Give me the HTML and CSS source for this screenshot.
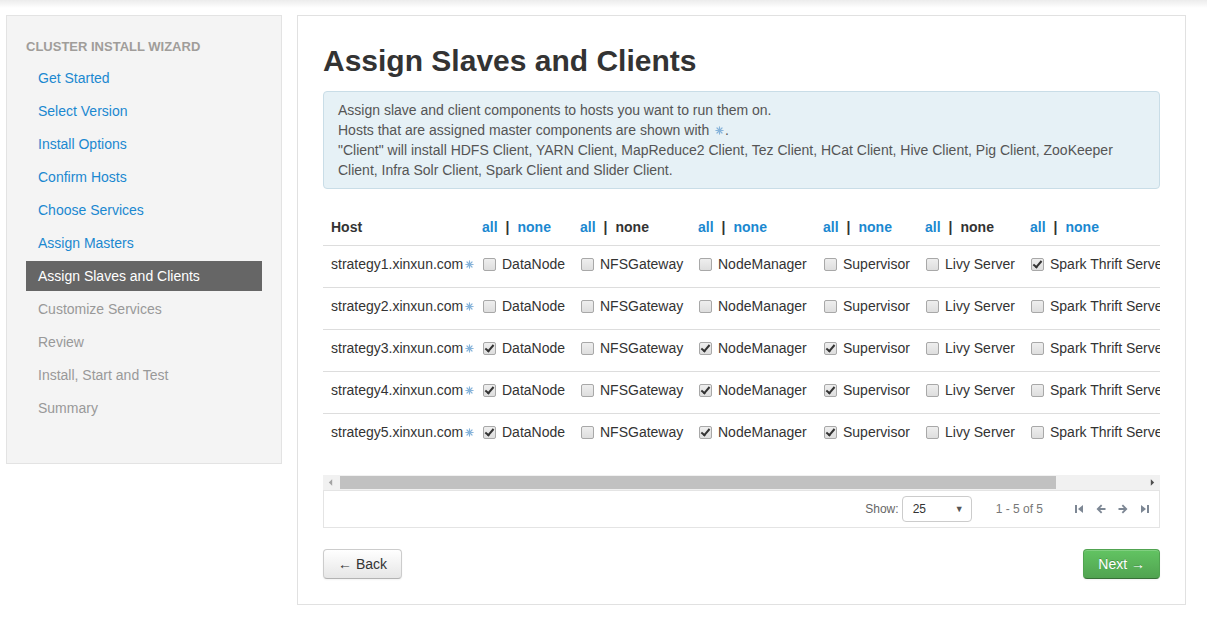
FILE: index.html
```html
<!DOCTYPE html>
<html lang="en">
<head>
<meta charset="utf-8">
<title>Assign Slaves and Clients</title>
<link rel="stylesheet" href="styles.css">
</head>
<body>
<div class="topshade"></div>
<div class="page">
  <aside class="sidebar">
    <div class="nav-header">CLUSTER INSTALL WIZARD</div>
    <ul class="nav">
      <li><a href="#">Get Started</a></li>
      <li><a href="#">Select Version</a></li>
      <li><a href="#">Install Options</a></li>
      <li><a href="#">Confirm Hosts</a></li>
      <li><a href="#">Choose Services</a></li>
      <li><a href="#">Assign Masters</a></li>
      <li class="active"><a href="#">Assign Slaves and Clients</a></li>
      <li class="disabled"><a href="#">Customize Services</a></li>
      <li class="disabled"><a href="#">Review</a></li>
      <li class="disabled"><a href="#">Install, Start and Test</a></li>
      <li class="disabled"><a href="#">Summary</a></li>
    </ul>
  </aside>

  <main class="content">
    <h2 class="title">Assign Slaves and Clients</h2>
    <div class="alert">
      Assign slave and client components to hosts you want to run them on.<br>
      Hosts that are assigned master components are shown with <svg class="ast" viewBox="0 0 10 10"><g stroke="#86b3da" stroke-width="1.3" stroke-linecap="round"><line x1="5" y1="1" x2="5" y2="9"/><line x1="1" y1="5" x2="9" y2="5"/><line x1="2.2" y1="2.2" x2="7.8" y2="7.8"/><line x1="7.8" y1="2.2" x2="2.2" y2="7.8"/></g></svg>.<br>
      "Client" will install HDFS Client, YARN Client, MapReduce2 Client, Tez Client, HCat Client, Hive Client, Pig Client, ZooKeeper Client, Infra Solr Client, Spark Client and Slider Client.
    </div>

    <div class="table-wrap">
      <table class="hosts">
        <colgroup>
          <col class="c-host"><col class="c-dn"><col class="c-nfs"><col class="c-nm"><col class="c-sup"><col class="c-livy"><col class="c-spark">
        </colgroup>
        <thead>
          <tr>
            <th>Host</th>
            <th><a href="#">all</a><span class="sep">|</span><a href="#">none</a></th>
            <th><a href="#">all</a><span class="sep">|</span><span class="off">none</span></th>
            <th><a href="#">all</a><span class="sep">|</span><a href="#">none</a></th>
            <th><a href="#">all</a><span class="sep">|</span><a href="#">none</a></th>
            <th><a href="#">all</a><span class="sep">|</span><span class="off">none</span></th>
            <th><a href="#">all</a><span class="sep">|</span><a href="#">none</a></th>
          </tr>
        </thead>
        <tbody>
          <tr>
            <td class="host">strategy1.xinxun.com<svg class="ast" viewBox="0 0 10 10"><g stroke="#86b3da" stroke-width="1.3" stroke-linecap="round"><line x1="5" y1="1" x2="5" y2="9"/><line x1="1" y1="5" x2="9" y2="5"/><line x1="2.2" y1="2.2" x2="7.8" y2="7.8"/><line x1="7.8" y1="2.2" x2="2.2" y2="7.8"/></g></svg></td>
            <td><label class="chk"><span class="cb"></span>DataNode</label></td>
            <td><label class="chk"><span class="cb"></span>NFSGateway</label></td>
            <td><label class="chk"><span class="cb"></span>NodeManager</label></td>
            <td><label class="chk"><span class="cb"></span>Supervisor</label></td>
            <td><label class="chk"><span class="cb"></span>Livy Server</label></td>
            <td><label class="chk"><span class="cb on"></span>Spark Thrift Server</label></td>
          </tr>
          <tr>
            <td class="host">strategy2.xinxun.com<svg class="ast" viewBox="0 0 10 10"><g stroke="#86b3da" stroke-width="1.3" stroke-linecap="round"><line x1="5" y1="1" x2="5" y2="9"/><line x1="1" y1="5" x2="9" y2="5"/><line x1="2.2" y1="2.2" x2="7.8" y2="7.8"/><line x1="7.8" y1="2.2" x2="2.2" y2="7.8"/></g></svg></td>
            <td><label class="chk"><span class="cb"></span>DataNode</label></td>
            <td><label class="chk"><span class="cb"></span>NFSGateway</label></td>
            <td><label class="chk"><span class="cb"></span>NodeManager</label></td>
            <td><label class="chk"><span class="cb"></span>Supervisor</label></td>
            <td><label class="chk"><span class="cb"></span>Livy Server</label></td>
            <td><label class="chk"><span class="cb"></span>Spark Thrift Server</label></td>
          </tr>
          <tr>
            <td class="host">strategy3.xinxun.com<svg class="ast" viewBox="0 0 10 10"><g stroke="#86b3da" stroke-width="1.3" stroke-linecap="round"><line x1="5" y1="1" x2="5" y2="9"/><line x1="1" y1="5" x2="9" y2="5"/><line x1="2.2" y1="2.2" x2="7.8" y2="7.8"/><line x1="7.8" y1="2.2" x2="2.2" y2="7.8"/></g></svg></td>
            <td><label class="chk"><span class="cb on"></span>DataNode</label></td>
            <td><label class="chk"><span class="cb"></span>NFSGateway</label></td>
            <td><label class="chk"><span class="cb on"></span>NodeManager</label></td>
            <td><label class="chk"><span class="cb on"></span>Supervisor</label></td>
            <td><label class="chk"><span class="cb"></span>Livy Server</label></td>
            <td><label class="chk"><span class="cb"></span>Spark Thrift Server</label></td>
          </tr>
          <tr>
            <td class="host">strategy4.xinxun.com<svg class="ast" viewBox="0 0 10 10"><g stroke="#86b3da" stroke-width="1.3" stroke-linecap="round"><line x1="5" y1="1" x2="5" y2="9"/><line x1="1" y1="5" x2="9" y2="5"/><line x1="2.2" y1="2.2" x2="7.8" y2="7.8"/><line x1="7.8" y1="2.2" x2="2.2" y2="7.8"/></g></svg></td>
            <td><label class="chk"><span class="cb on"></span>DataNode</label></td>
            <td><label class="chk"><span class="cb"></span>NFSGateway</label></td>
            <td><label class="chk"><span class="cb on"></span>NodeManager</label></td>
            <td><label class="chk"><span class="cb on"></span>Supervisor</label></td>
            <td><label class="chk"><span class="cb"></span>Livy Server</label></td>
            <td><label class="chk"><span class="cb"></span>Spark Thrift Server</label></td>
          </tr>
          <tr>
            <td class="host">strategy5.xinxun.com<svg class="ast" viewBox="0 0 10 10"><g stroke="#86b3da" stroke-width="1.3" stroke-linecap="round"><line x1="5" y1="1" x2="5" y2="9"/><line x1="1" y1="5" x2="9" y2="5"/><line x1="2.2" y1="2.2" x2="7.8" y2="7.8"/><line x1="7.8" y1="2.2" x2="2.2" y2="7.8"/></g></svg></td>
            <td><label class="chk"><span class="cb on"></span>DataNode</label></td>
            <td><label class="chk"><span class="cb"></span>NFSGateway</label></td>
            <td><label class="chk"><span class="cb on"></span>NodeManager</label></td>
            <td><label class="chk"><span class="cb on"></span>Supervisor</label></td>
            <td><label class="chk"><span class="cb"></span>Livy Server</label></td>
            <td><label class="chk"><span class="cb"></span>Spark Thrift Server</label></td>
          </tr>
        </tbody>
      </table>
    </div>

    <div class="hscroll">
      <div class="sb-btn"><svg viewBox="0 0 6 8"><polygon points="5,0 1,4 5,8"/></svg></div>
      <div class="sb-track"><div class="sb-thumb"></div></div>
      <div class="sb-btn"><svg viewBox="0 0 6 8"><polygon points="1,0 5,4 1,8"/></svg></div>
    </div>

    <div class="pager">
      <span class="show">Show:</span>
      <div class="select"><span>25</span><span class="caret">&#9660;</span></div>
      <span class="range">1 - 5 of 5</span>
      <div class="pnav">
        <svg viewBox="0 0 10 10"><rect x="1" y="1" width="2" height="8"/><polygon points="9,1 4,5 9,9"/></svg>
        <svg viewBox="0 0 10 10"><polygon points="5,0.5 0.5,5 5,9.5 6.3,8.2 4.1,6 9.5,6 9.5,4 4.1,4 6.3,1.8"/></svg>
        <svg viewBox="0 0 10 10"><polygon points="5,0.5 9.5,5 5,9.5 3.7,8.2 5.9,6 0.5,6 0.5,4 5.9,4 3.7,1.8"/></svg>
        <svg viewBox="0 0 10 10"><polygon points="1,1 6,5 1,9"/><rect x="7" y="1" width="2" height="8"/></svg>
      </div>
    </div>

    <div class="actions">
      <button class="btn">&larr; Back</button>
      <button class="btn btn-success">Next &rarr;</button>
    </div>
  </main>
</div>
</body>
</html>
```

FILE: styles.css
```css
* { box-sizing: border-box; }

html, body {
  margin: 0;
  padding: 0;
  background: #fff;
  font-family: "Liberation Sans", Arial, Helvetica, sans-serif;
  font-size: 14px;
  line-height: 20px;
  color: #333;
}

a { color: #1b88d0; text-decoration: none; }

.topshade {
  height: 8px;
  background: linear-gradient(#ececec, #fff);
}

.page {
  display: flex;
  align-items: flex-start;
  gap: 15px;
  padding: 7px 0 0 6px;
}

/* Sidebar */
.sidebar {
  flex: none;
  width: 276px;
  background: #f4f4f4;
  border: 1px solid #e3e3e3;
  padding: 21px 19px 37px;
}

.nav-header {
  font-size: 13px;
  font-weight: bold;
  color: #a09d9a;
  line-height: 20px;
  margin-bottom: 6px;
}

.nav {
  list-style: none;
  margin: 0;
  padding: 0;
}

.nav li {
  height: 30px;
  margin-bottom: 3px;
}

.nav li a {
  display: block;
  line-height: 30px;
  padding-left: 12px;
}

.nav li.active a {
  background: #666;
  color: #fff;
}

.nav li.disabled a { color: #999; }

/* Main content */
.content {
  flex: none;
  width: 889px;
  border: 1px solid #e1e1e1;
  padding: 25px 25px 25px;
}

.title {
  font-size: 30px;
  font-weight: bold;
  line-height: 40px;
  margin: 0 0 10px;
  color: #333;
}

.alert {
  background: #e6f1f6;
  border: 1px solid #c9dde7;
  border-radius: 4px;
  padding: 8px 35px 8px 14px;
  color: #555;
}

.ast {
  width: 9px;
  height: 9px;
  margin: 0 1px 0 2px;
  vertical-align: 0;
}

.table-wrap {
  margin-top: 20px;
  overflow: hidden;
}

.hosts {
  table-layout: fixed;
  width: 942px;
  border-collapse: collapse;
  margin-bottom: 20px;
}

.c-host { width: 151px; }
.c-dn { width: 98px; }
.c-nfs { width: 118px; }
.c-nm { width: 125px; }
.c-sup { width: 102px; }
.c-livy { width: 105px; }
.c-spark { width: 243px; }

.hosts th {
  text-align: left;
  font-weight: bold;
  padding: 8px;
  line-height: 20px;
  white-space: nowrap;
}

.hosts th .sep {
  margin: 0 8px;
  color: #333;
}

.hosts th .off { color: #333; }

.hosts td {
  border-top: 1px solid #ddd;
  padding: 8px 8px 8px;
  white-space: nowrap;
  overflow: hidden;
}

.hosts td.host { padding-bottom: 13px; }

.chk {
  display: flex;
  align-items: center;
  gap: 6px;
  margin-bottom: 5px;
  line-height: 20px;
  padding-left: 1px;
}

.cb {
  flex: none;
  position: relative;
  width: 13px;
  height: 13px;
  border: 1px solid #a8a8a8;
  border-radius: 2px;
  background: linear-gradient(#eeeeee, #dedede);
}

.cb.on::after {
  content: "";
  position: absolute;
  left: 3px;
  top: 0px;
  width: 3px;
  height: 7px;
  border-right: 2px solid #333;
  border-bottom: 2px solid #333;
  transform: rotate(40deg);
}

/* Fake horizontal scrollbar */
.hscroll {
  display: flex;
  height: 15px;
  background: #f1f1f1;
}

.sb-btn {
  flex: none;
  width: 15px;
  display: flex;
  align-items: center;
  justify-content: center;
}

.sb-btn svg {
  width: 5px;
  height: 7px;
  fill: #a3a3a3;
}

.sb-btn:last-child svg { fill: #505050; }

.sb-track {
  flex: 1;
  padding: 1px 89px 1px 2px;
}

.sb-thumb {
  height: 100%;
  background: #c1c1c1;
}

/* Pager */
.pager {
  display: flex;
  align-items: center;
  justify-content: flex-end;
  height: 38px;
  border: 1px solid #e4e4e4;
  padding-right: 9px;
  font-size: 12px;
  color: #666;
}

.show { margin-right: 3px; }

.select {
  display: flex;
  align-items: center;
  justify-content: space-between;
  width: 70px;
  height: 26px;
  border: 1px solid #ccc;
  border-radius: 4px;
  padding: 0 7px 0 10px;
  color: #333;
  font-size: 12px;
}

.caret { font-size: 9px; color: #555; }

.range {
  margin-left: 24px;
  color: #777;
}

.pnav {
  display: flex;
  gap: 12px;
  margin-left: 31px;
}

.pnav svg {
  width: 10px;
  height: 10px;
  fill: #7d8794;
}

/* Actions */
.actions {
  display: flex;
  justify-content: space-between;
  margin-top: 21px;
}

.btn {
  font-family: inherit;
  font-size: 14px;
  line-height: 20px;
  height: 30px;
  padding: 4px 14px;
  color: #333;
  background: linear-gradient(#ffffff, #e6e6e6);
  border: 1px solid #cccccc;
  border-bottom-color: #b3b3b3;
  border-radius: 4px;
  box-shadow: inset 0 1px 0 rgba(255,255,255,.2), 0 1px 2px rgba(0,0,0,.05);
  cursor: pointer;
}

.btn-success {
  color: #fff;
  background: linear-gradient(#62c462, #51a351);
  border-color: #51a351 #51a351 #387038;
  text-shadow: 0 -1px 0 rgba(0,0,0,.2);
}
```
